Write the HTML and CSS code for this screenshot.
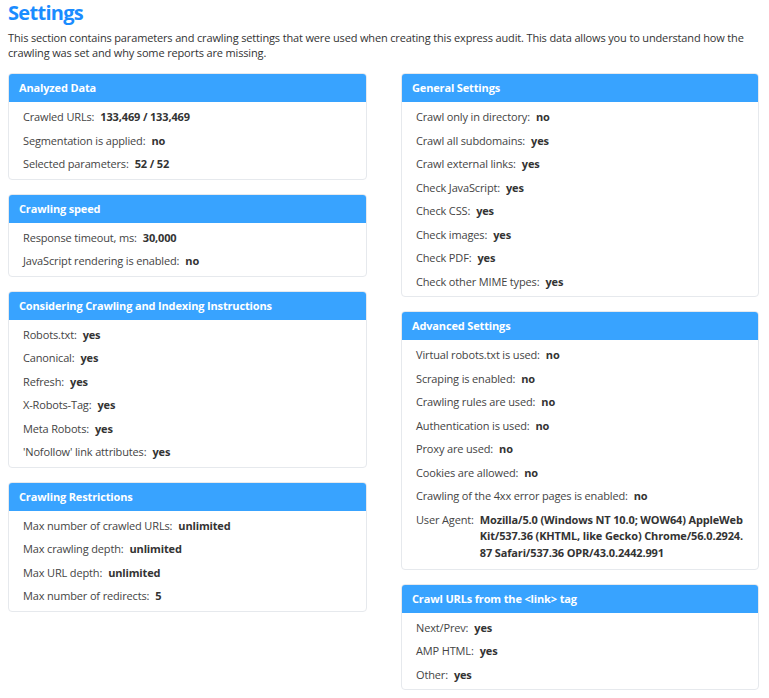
FILE: index.html
```html
<!DOCTYPE html>
<html>
<head>
<meta charset="utf-8">
<link rel="stylesheet" href="styles.css">
</head>
<body>
<h1 class="title">Settings</h1>
<p class="intro">This section contains parameters and crawling settings that were used when creating this express audit. This data allows you to understand how the crawling was set and why some reports are missing.</p>
<div class="columns">
  <div class="column">
    <section class="card">
      <h2 class="card-head">Analyzed Data</h2>
      <div class="card-body">
        <div class="row"><span class="label">Crawled URLs:</span><span class="value">133,469 / 133,469</span></div>
        <div class="row"><span class="label">Segmentation is applied:</span><span class="value">no</span></div>
        <div class="row"><span class="label">Selected parameters:</span><span class="value">52 / 52</span></div>
      </div>
    </section>
    <section class="card">
      <h2 class="card-head">Crawling speed</h2>
      <div class="card-body">
        <div class="row"><span class="label">Response timeout, ms:</span><span class="value">30,000</span></div>
        <div class="row"><span class="label">JavaScript rendering is enabled:</span><span class="value">no</span></div>
      </div>
    </section>
    <section class="card">
      <h2 class="card-head">Considering Crawling and Indexing Instructions</h2>
      <div class="card-body">
        <div class="row"><span class="label">Robots.txt:</span><span class="value">yes</span></div>
        <div class="row"><span class="label">Canonical:</span><span class="value">yes</span></div>
        <div class="row"><span class="label">Refresh:</span><span class="value">yes</span></div>
        <div class="row"><span class="label">X-Robots-Tag:</span><span class="value">yes</span></div>
        <div class="row"><span class="label">Meta Robots:</span><span class="value">yes</span></div>
        <div class="row"><span class="label">'Nofollow' link attributes:</span><span class="value">yes</span></div>
      </div>
    </section>
    <section class="card">
      <h2 class="card-head">Crawling Restrictions</h2>
      <div class="card-body">
        <div class="row"><span class="label">Max number of crawled URLs:</span><span class="value">unlimited</span></div>
        <div class="row"><span class="label">Max crawling depth:</span><span class="value">unlimited</span></div>
        <div class="row"><span class="label">Max URL depth:</span><span class="value">unlimited</span></div>
        <div class="row"><span class="label">Max number of redirects:</span><span class="value">5</span></div>
      </div>
    </section>
  </div>
  <div class="column">
    <section class="card">
      <h2 class="card-head">General Settings</h2>
      <div class="card-body">
        <div class="row"><span class="label">Crawl only in directory:</span><span class="value">no</span></div>
        <div class="row"><span class="label">Crawl all subdomains:</span><span class="value">yes</span></div>
        <div class="row"><span class="label">Crawl external links:</span><span class="value">yes</span></div>
        <div class="row"><span class="label">Check JavaScript:</span><span class="value">yes</span></div>
        <div class="row"><span class="label">Check CSS:</span><span class="value">yes</span></div>
        <div class="row"><span class="label">Check images:</span><span class="value">yes</span></div>
        <div class="row"><span class="label">Check PDF:</span><span class="value">yes</span></div>
        <div class="row"><span class="label">Check other MIME types:</span><span class="value">yes</span></div>
      </div>
    </section>
    <section class="card">
      <h2 class="card-head">Advanced Settings</h2>
      <div class="card-body">
        <div class="row"><span class="label">Virtual robots.txt is used:</span><span class="value">no</span></div>
        <div class="row"><span class="label">Scraping is enabled:</span><span class="value">no</span></div>
        <div class="row"><span class="label">Crawling rules are used:</span><span class="value">no</span></div>
        <div class="row"><span class="label">Authentication is used:</span><span class="value">no</span></div>
        <div class="row"><span class="label">Proxy are used:</span><span class="value">no</span></div>
        <div class="row"><span class="label">Cookies are allowed:</span><span class="value">no</span></div>
        <div class="row"><span class="label">Crawling of the 4xx error pages is enabled:</span><span class="value">no</span></div>
        <div class="row"><span class="label">User Agent:</span><span class="value value-long">Mozilla/5.0 (Windows NT 10.0; WOW64) AppleWebKit/537.36 (KHTML, like Gecko) Chrome/56.0.2924.87 Safari/537.36 OPR/43.0.2442.991</span></div>
      </div>
    </section>
    <section class="card">
      <h2 class="card-head">Crawl URLs from the &lt;link&gt; tag</h2>
      <div class="card-body">
        <div class="row"><span class="label">Next/Prev:</span><span class="value">yes</span></div>
        <div class="row"><span class="label">AMP HTML:</span><span class="value">yes</span></div>
        <div class="row"><span class="label">Other:</span><span class="value">yes</span></div>
      </div>
    </section>
  </div>
</div>
</body>
</html>
```
FILE: styles.css
```css
* { box-sizing: border-box; }
body {
  margin: 0;
  padding: 0 8px;
  font-family: "Open Sans", "Liberation Sans", sans-serif;
  color: #444;
  background: #fff;
  letter-spacing: -0.15px;
}
.title {
  margin: 0 0 4px;
  font-size: 20px;
  line-height: 26px;
  font-weight: 700;
  letter-spacing: -0.7px;
  color: #1a8cff;
}
.intro {
  margin: 0;
  font-size: 11px;
  line-height: 15px;
  color: #333;
}
.columns {
  display: grid;
  grid-template-columns: 359px 358px;
  column-gap: 34px;
  margin-top: 13px;
}
.column {
  display: flex;
  flex-direction: column;
  gap: 14px;
}
.card {
  border: 1px solid #e6e9ed;
  border-radius: 4px;
  overflow: hidden;
  background: #fff;
}
.card-head {
  margin: 0;
  background: #38a3ff;
  color: #fff;
  font-size: 11px;
  font-weight: 700;
  height: 28px;
  line-height: 28px;
  padding: 0 10px;
}
.card-body {
  padding: 3px 14px 3px;
}
.row {
  display: flex;
  align-items: baseline;
  font-size: 11px;
  line-height: 15.5px;
  padding: 4px 0;
}
.label {
  color: #444;
  margin-right: 6px;
  white-space: nowrap;
}
.value {
  font-weight: 700;
  color: #333;
}
.value-long {
  line-height: 16.7px;
  word-break: break-all;
}
```
